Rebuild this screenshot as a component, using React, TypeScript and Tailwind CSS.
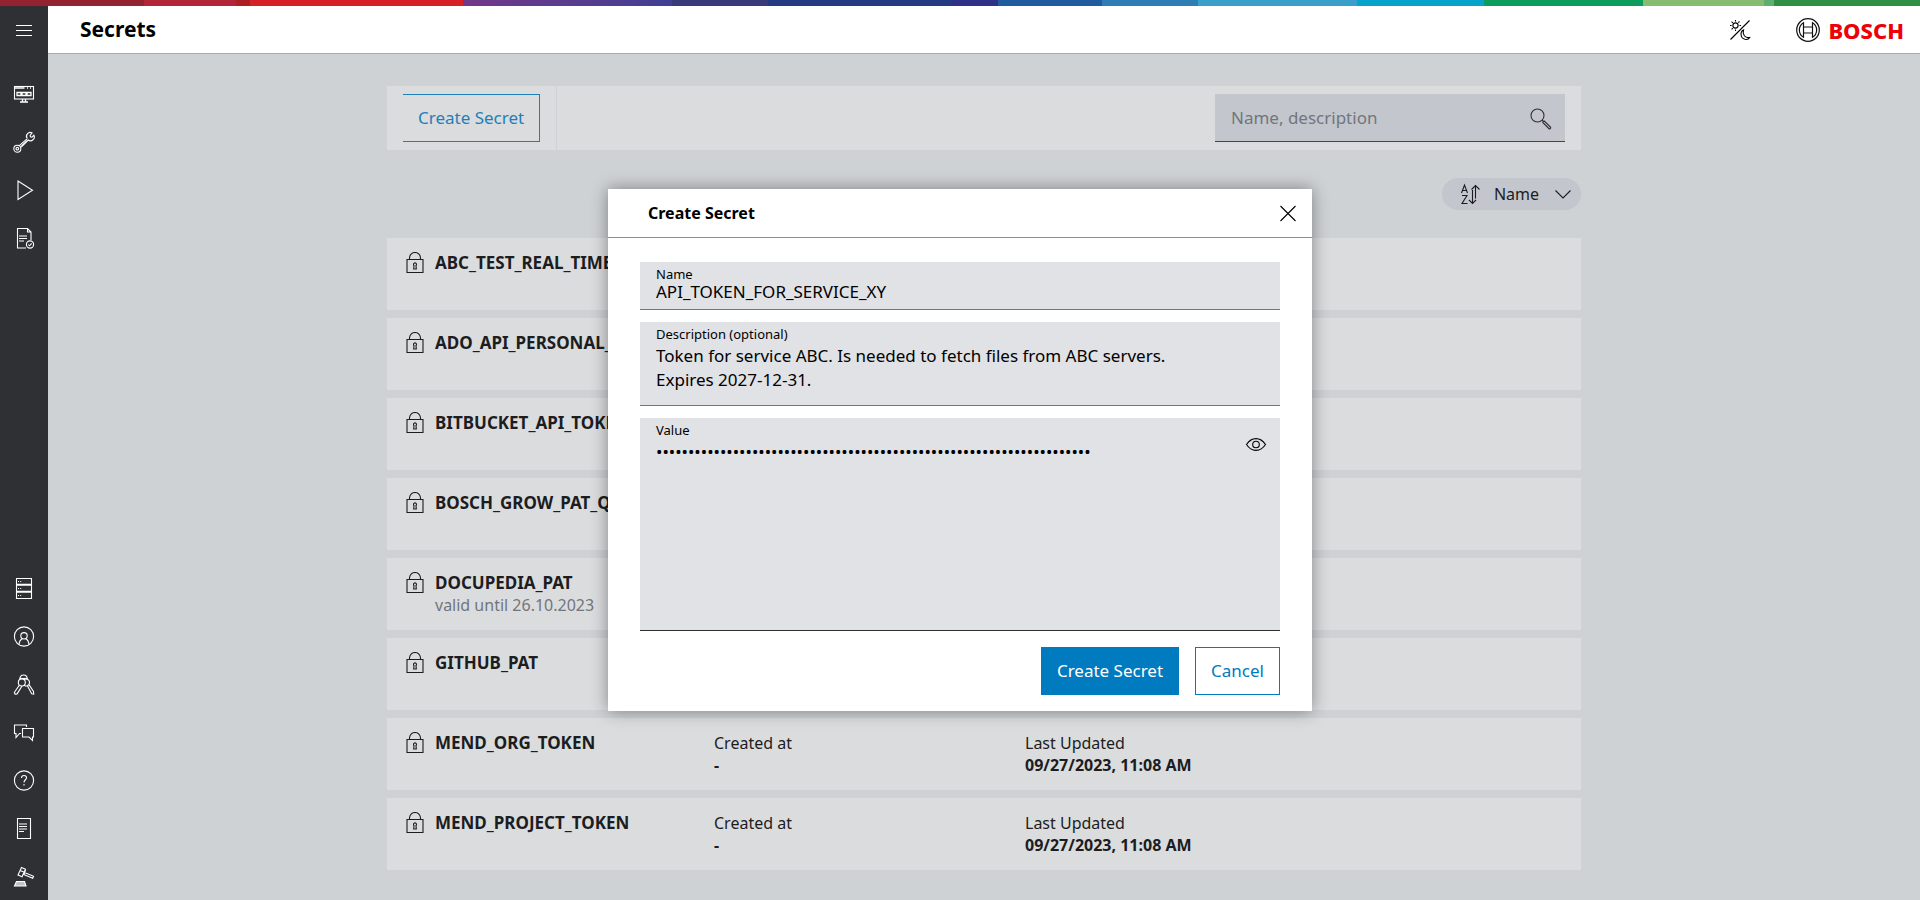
import type { ReactNode } from "react";

const TOP = [
  ["w-[7.5%]", "bg-[#942331]"],
  ["w-[4.8%]", "bg-[#b12739]"],
  ["w-[0.7%]", "bg-[#ae1f24]"],
  ["w-[11.1%]", "bg-[#d42027]"],
  ["w-[10.9%]", "bg-linear-to-r from-[#71368a] to-[#3f3f92]"],
  ["w-[5%]", "bg-[#383a7a]"],
  ["w-[9.6%]", "bg-[#233a80]"],
  ["w-[2.4%]", "bg-[#2d3187]"],
  ["w-[5.4%]", "bg-[#205a9f]"],
  ["w-[5%]", "bg-[#2f7db5]"],
  ["w-[8.3%]", "bg-[#3a9fc9]"],
  ["w-[6.6%]", "bg-[#06a3cb]"],
  ["w-[8.3%]", "bg-[#0c9c5c]"],
  ["w-[6.3%]", "bg-[#88bd70]"],
  ["w-[0.5%]", "bg-[#5fb070]"],
  ["w-[7.6%]", "bg-[#308e47]"],
];

function Icon({ children }: { children: ReactNode }) {
  return (
    <svg width={24} height={24} viewBox="0 0 24 24" fill="none" stroke="currentColor" strokeWidth="1.1" aria-hidden="true" className="shrink-0">
      {children}
    </svg>
  );
}

const UPPER: [string, ReactNode][] = [
  ["Workspaces", <><rect x="2.5" y="4.500" width="19" height="12.500" /><path d="M2.500 6h10M15 6h1M18 6h1M5 10.500h4v3H5zM10 10.500h4v3h-4zM15 10.500h4v3h-4zM10.500 17v3M13.500 17v3M8 20h8" strokeWidth="1.300" /></>],
  ["Configuration", <><path d="M15.300 8.700a3.800 3.800 0 0 1 4.800-5.700l-2 2.400.3 1.500 1.500.3 2-2a3.800 3.800 0 0 1-5.600 4.800L9.200 17.200M15.300 8.700L7.300 15.600" /><circle cx="5.300" cy="18.700" r="3.500" /><circle cx="5.300" cy="18.700" r="1.300" /><path d="M15 10.700l-5.500 5.300" /></>],
  ["Runs", <path d="M6 3v18.500L20.500 12.300z" />],
  ["Reports", <><path d="M14 22H5.500V2.500h10L19 6v8M15.500 2.500V6H19M7 10h8M7 12.500h8M7 15h5" /><circle cx="18" cy="18.500" r="3.600" /><path d="M16.300 18.500l1.200 1.300 2.200-2.400" /></>],
];

const LOWER: [string, ReactNode][] = [
  ["Servers", <path d="M4.500 2.500h15v20h-15zM4.500 8.200h15M4.500 15.200h15M4.500 9.300h15M4.500 16.300h15M6 5.500h1M8.200 5.500h1M6 12.500h1M8.200 12.500h1M6 19.500h1M8.200 19.500h1" />],
  ["Account", <><circle cx="12" cy="12.500" r="9.600" /><circle cx="12" cy="11.800" r="3.200" /><path d="M7 20.500c.3-3.500 2-5.200 3.500-6M17 20.500c-.3-3.500-2-5.200-3.500-6" /></>],
  ["Secrets", <><path d="M7.800 7.500c0-3 1.500-4.500 3.700-4.500s3.800 1.500 3.800 4.500" /><path d="M7.800 6.500h7.500" /><circle cx="9.800" cy="10.500" r="3.500" /><path d="M12 7.700a3.500 3.500 0 1 1 1.500 6.300l-1.500-.7M7.300 13.300L2.300 20.500l.8 1.600 2-.2L10 14M15.500 14l4.200 7.700 2 .3-.2-2.600-4.700-7" /></>],
  ["Feedback", <><path d="M14.500 7V5h-12v8.500H4v4l3.500-4H9" /><path d="M10.500 8.500h11V17h-1v3.500L17 17h-6.500z" /></>],
  ["Help", <><circle cx="12" cy="12.500" r="9.600" /><path d="M9.500 10c0-1.500 1-2.500 2.500-2.500s2.500 1 2.500 2.300c0 2-2.500 2-2.500 4.700M12 16v1.600" /></>],
  ["Documentation", <path d="M5.500 2.500h13v20h-13zM7 8h8M7 10.500h8M7 13h8M7 15.500h5" />],
  ["Legal", <><path d="M9.500 3.500l4 1.800-3.500 7.500-4-1.800zM8.200 6.500l4 1.800M13.500 6l-1.500 4.500M12.500 8.500l9 3.800-.8 2-9-3.900" /><path d="M4.500 17.500h8L14 22H2.500z" fill="currentColor" fillOpacity=".7" /></>],
];

function NavItem({ label, children }: { label: string; children: ReactNode }) {
  return (
    <a href="#" aria-label={label} className="flex h-12 w-12 items-center justify-center">
      <Icon>{children}</Icon>
    </a>
  );
}

const SECRETS = [
  { name: "ABC_TEST_REAL_TIME", note: "" },
  { name: "ADO_API_PERSONAL_TOKEN", note: "" },
  { name: "BITBUCKET_API_TOKEN", note: "" },
  { name: "BOSCH_GROW_PAT_Q", note: "" },
  { name: "DOCUPEDIA_PAT", note: "valid until 26.10.2023" },
  { name: "GITHUB_PAT", note: "" },
  { name: "MEND_ORG_TOKEN", note: "" },
  { name: "MEND_PROJECT_TOKEN", note: "" },
];

export default function App() {
  return (
    <div className="relative flex h-screen flex-col overflow-hidden bg-[#ced2d5] font-['Noto_Sans',sans-serif] text-base text-black">
      <div className="flex h-1.5 shrink-0">
        {TOP.map(([w, c]) => (
          <div key={c} className={`${w} ${c}`} />
        ))}
      </div>
      <div className="flex min-h-0 flex-1">
        <nav className="flex w-12 shrink-0 flex-col justify-between bg-[#2e3033] text-white">
          <div>
            <button aria-label="Menu" className="mb-4 flex h-12 w-12 items-center justify-center">
              <Icon><path d="M4 7.500h16M4 12.500h16M4 17.500h16" /></Icon>
            </button>
            {UPPER.map(([l, i]) => <NavItem key={l} label={l}>{i}</NavItem>)}
          </div>
          <div>{LOWER.map(([l, i]) => <NavItem key={l} label={l}>{i}</NavItem>)}</div>
        </nav>
        <div className="flex min-w-0 flex-1 flex-col">
          <header className="flex h-12 shrink-0 items-center border-b border-[#a4abb3] bg-white pr-4 pl-8">
            <h1 className="flex-1 text-[21px] font-bold">Secrets</h1>
            <button aria-label="Toggle theme" className="mr-11">
              <Icon>
                <path d="M21.500 2.500L2.500 21.500" />
                <circle cx="7.500" cy="7.500" r="2.600" />
                <path d="M7.500 2v1.600M7.500 11.400V13M2 7.500h1.600M11.400 7.500H13M3.600 3.600l1.200 1.200M10.300 4.700l1.200-1.200M3.600 11.400l1.200-1.200M15.500 12c-3.500 1.500-3.500 8 1.500 9.300 2 .4 3.800-.3 4.700-1.800-4.800.8-7.500-3-6.200-7.500z" />
              </Icon>
            </button>
            <svg width="24" height="24" viewBox="0 0 24 24" fill="none" stroke="#111" strokeWidth="1.200" aria-hidden="true">
              <circle cx="12" cy="12" r="11.300" />
              <path d="M7.500 4.700a8.500 8.500 0 0 0 0 14.600zM16.500 4.700a8.500 8.500 0 0 1 0 14.600zM7.500 9h9M7.500 15h9" />
            </svg>
            <span className="ml-2 text-[22px] leading-6 font-extrabold text-[#ed0007]">BOSCH</span>
          </header>
          <main className="mx-auto w-full max-w-[1194px] pt-8">
            <div className="flex h-16 items-center bg-[#dbdcde]">
              <div className="flex h-16 items-center border-r border-[#ced2d5] px-4">
                <button className="h-12 border border-l-0 border-[#1f7fb8] px-[15px] text-[17px] text-[#1f7fb8]">Create Secret</button>
              </div>
              <label className="mr-4 ml-auto flex h-12 w-[350px] items-center border-b border-[#43464a] bg-[#c3c6cc] pr-3 pl-4 text-[#2e3033]">
                <input aria-label="Search secrets" placeholder="Name, description" className="min-w-0 flex-1 text-[17px] outline-none placeholder:text-[#71767c]" />
                <Icon>
                  <circle cx="8.500" cy="9.500" r="6.500" />
                  <path d="M13 14l1.500 1.500M13.800 16.500l1.500-1.500 6 6a1 1 0 0 1-1.500 1.500z" />
                </Icon>
              </label>
            </div>
            <div className="flex justify-end py-7">
              <button className="flex h-8 items-center gap-3 rounded-full bg-[#c3c6cc] pr-1.5 pl-4 text-[#1c1d20]">
                <Icon>
                  <path d="M3.500 11L6.500 3l3 8M4.500 8.500h4M4 13.500h5l-5 8h5.500M14.500 21.500V8M17.500 3.500v13M11 18l3.500 3.500 3.500-3.500M13.500 7.500l4-4 4 4" />
                </Icon>
                <span>Name</span>
                <Icon><path d="M4.500 8.500l7.500 7.500 7.500-7.500" /></Icon>
              </button>
            </div>
            <ul className="flex flex-col gap-2">
              {SECRETS.map((s) => (
                <li key={s.name} className="flex h-[72px] bg-[#dbdcde] pt-3.5 pl-4 leading-[22px] text-[#1c1d20]">
                  <Icon>
                    <path d="M4 7.500h16v13H4zM6.500 7.500V6a5.500 5.500 0 0 1 11 0v1.500" />
                    <path d="M11 13.500a1.500 1.500 0 1 1 2 0l.3 3.500h-2.600z" />
                  </Icon>
                  <div className="ml-2 w-[279px]">
                    <h2 className="text-[17px] font-bold">{s.name}</h2>
                    <p className="text-[#71767c]">{s.note}</p>
                  </div>
                  <div className="w-[311px]">
                    <p>Created at</p>
                    <p className="font-bold">-</p>
                  </div>
                  <div>
                    <p>Last Updated</p>
                    <p className="font-bold">09/27/2023, 11:08 AM</p>
                  </div>
                </li>
              ))}
            </ul>
          </main>
        </div>
      </div>

      <div className="absolute inset-0 flex items-center justify-center">
        <div role="dialog" aria-labelledby="dialog-title" className="w-[704px] bg-white shadow-[0_0_16px_rgba(0,0,0,0.4)]">
          <div className="flex h-[49px] items-center border-b border-[#8a9097] pr-3 pl-10">
            <h2 id="dialog-title" className="flex-1 font-bold">Create Secret</h2>
            <button aria-label="Close"><Icon><path d="M4.500 5l15 15M19.500 5l-15 15" /></Icon></button>
          </div>
          <form className="flex flex-col gap-3 px-8 pt-6 pb-4">
            <label className="flex h-12 flex-col border-b border-[#71767c] bg-[#e0e2e5] px-4 pt-1.5">
              <span className="text-[13px] leading-3">Name</span>
              <input defaultValue="API_TOKEN_FOR_SERVICE_XY" className="h-6 text-[17px] outline-none" />
            </label>
            <label className="flex h-[84px] flex-col border-b border-[#71767c] bg-[#e0e2e5] px-4 pt-1.5">
              <span className="text-[13px] leading-3">Description (optional)</span>
              <textarea
                defaultValue={"Token for service ABC. Is needed to fetch files from ABC servers.\nExpires 2027-12-31."}
                className="mt-1 h-14 resize-none text-[17px] leading-6 outline-none"
              />
            </label>
            <div className="flex h-[213px] border-b border-[#2e3033] bg-[#e0e2e5] pr-3 pl-4">
              <label className="flex flex-1 flex-col pt-1.5">
                <span className="text-[13px] leading-3">Value</span>
                <textarea defaultValue={"•".repeat(68)} className="mt-1 flex-1 resize-none text-[17px] leading-6 outline-none" />
              </label>
              <button type="button" aria-label="Show value" className="h-6 pt-3.5">
                <Icon><path d="M2.500 12.500c5-7.800 14-7.800 19 0-5 7.800-14 7.800-19 0z" /><circle cx="12" cy="12.500" r="3.300" /></Icon>
              </button>
            </div>
            <div className="flex justify-end gap-4 pt-1">
              <button type="button" className="h-12 border border-[#007bc0] bg-[#007bc0] px-[15px] text-[17px] text-white">Create Secret</button>
              <button type="button" className="h-12 border border-[#007bc0] px-[15px] text-[17px] text-[#007bc0]">Cancel</button>
            </div>
          </form>
        </div>
      </div>
    </div>
  );
}
